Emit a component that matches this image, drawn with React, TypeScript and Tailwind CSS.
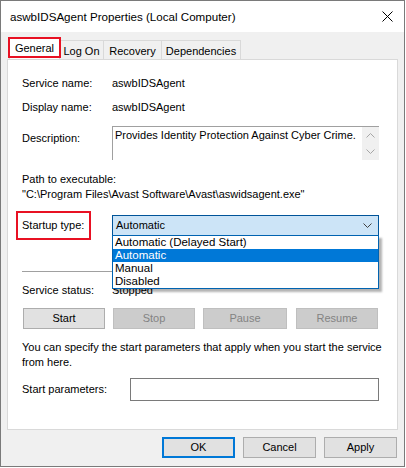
import { ReactNode } from "react";

const font = { fontFamily: '"Liberation Sans", Arial, sans-serif' };

function TabButton({ label, active, width }: { label: string; active?: boolean; width: string }) {
  if (active) {
    return (
      <div className={`relative z-10 -mb-px flex h-[22px] ${width} items-start justify-center border border-b-0 border-[#d9d9d9] bg-white pt-[3px]`}>
        {label}
        <div className="pointer-events-none absolute -left-[2px] -top-[1px] h-[21px] w-[53px] border-2 border-[#e81123]" />
      </div>
    );
  }
  return (
    <div className={`mt-[3px] flex h-[19px] ${width} items-center justify-center border border-b-0 border-l-0 border-[#d9d9d9] bg-[#f0f0f0] pt-[2px]`}>
      {label}
    </div>
  );
}

function FieldRow({
  label,
  children,
  className = "",
  labelClass = "",
}: {
  label: string;
  children: ReactNode;
  className?: string;
  labelClass?: string;
}) {
  return (
    <div className={`flex ${className}`}>
      <div className={`w-[90px] shrink-0 ${labelClass}`}>{label}</div>
      {children}
    </div>
  );
}

function ServiceButton({
  label,
  disabled,
  width = "w-[82px]",
  className = "",
}: {
  label: string;
  disabled?: boolean;
  width?: string;
  className?: string;
}) {
  return (
    <div
      className={`flex h-[21px] ${width} items-center justify-center border ${className} ${
        disabled
          ? "border-[#bfbfbf] bg-[#cccccc] text-[#838383]"
          : "border-[#adadad] bg-[#e1e1e1] text-black"
      }`}
    >
      {label}
    </div>
  );
}

function Chevron({ up, className = "" }: { up?: boolean; className?: string }) {
  return (
    <svg width="9" height="5" viewBox="0 0 9 5" className={className}>
      <path
        d={up ? "M0.5 4.5 L4.5 0.5 L8.5 4.5" : "M0.5 0.5 L4.5 4.5 L8.5 0.5"}
        fill="none"
        stroke="currentColor"
        strokeWidth="1"
      />
    </svg>
  );
}

export default function App() {
  const startupOptions = ["Automatic (Delayed Start)", "Automatic", "Manual", "Disabled"];
  const selected = "Automatic";

  return (
    <div
      style={font}
      className="h-[468px] w-[406px] overflow-hidden bg-white text-[11px] leading-[15px] text-black"
    >
      <div className="flex h-[467px] w-[405px] flex-col border border-[#7a7a7a] bg-[#f0f0f0]">
        {/* title bar */}
        <div className="flex h-[31px] shrink-0 items-center justify-between bg-white pl-[9px] pr-[10px]">
          <span className="text-[11.6px]">aswbIDSAgent Properties (Local Computer)</span>
          <svg width="11" height="11" viewBox="0 0 11 11" className="mr-[1px]">
            <path d="M0.5 0.5 L10.5 10.5 M10.5 0.5 L0.5 10.5" stroke="#000" strokeWidth="1" />
          </svg>
        </div>

        {/* tab strip */}
        <div className="mt-[5px] flex pl-[8px]">
          <TabButton label="General" active width="w-[51px]" />
          <TabButton label="Log On" width="w-[44px]" />
          <TabButton label="Recovery" width="w-[58px]" />
          <TabButton label="Dependencies" width="w-[79px]" />
        </div>

        {/* General page */}
        <div className="ml-[6px] h-[371px] w-[391px] shrink-0 border border-[#d9d9d9] bg-white pl-[14px]">
          <FieldRow label="Service name:" className="mt-[16px]">
            <span>aswbIDSAgent</span>
          </FieldRow>
          <FieldRow label="Display name:" className="mt-[9px]">
            <span>aswbIDSAgent</span>
          </FieldRow>

          <FieldRow label="Description:" className="mt-[11px]" labelClass="pt-[5px]">
            <div className="flex h-[34px] w-[267px] border-l border-t border-[#a0a0a0] bg-white">
              <div className="flex-1 whitespace-nowrap pl-[2px] pt-[1px]">
                Provides Identity Protection Against Cyber Crime.
              </div>
              <div className="flex w-[17px] flex-col items-center justify-between bg-[#f0f0f0] py-[6px] text-[#a6a6a6]">
                <Chevron up />
                <Chevron />
              </div>
            </div>
          </FieldRow>

          <div className="mt-[12px]">Path to executable:</div>
          <div>"C:\Program Files\Avast Software\Avast\aswidsagent.exe"</div>

          {/* startup type */}
          <div className="relative mt-[13px] flex items-center">
            <div className="relative w-[90px] shrink-0">
              Startup type:
              <div className="pointer-events-none absolute -left-[6px] -top-[7px] h-[29px] w-[75px] border-2 border-[#e81123]" />
            </div>
            <div className="relative">
              <div className="flex h-[21px] w-[267px] items-center justify-between border border-[#005499] bg-[#cce4f7] pl-[3px] pr-[6px]">
                <span>{selected}</span>
                <Chevron className="text-[#404040]" />
              </div>
              <div className="absolute left-0 top-[20px] z-20 w-[267px] border border-[#0063b1] bg-white shadow-[3px_3px_2px_rgba(0,0,0,0.3)]">
                {startupOptions.map((option) => (
                  <div
                    key={option}
                    className={`h-[13px] pl-[2px] text-[11.5px] leading-[13px] ${
                      option === selected ? "bg-[#0078d7] text-white" : ""
                    }`}
                  >
                    {option}
                  </div>
                ))}
              </div>
            </div>
          </div>

          <div className="mt-[35px] h-px w-[356px] bg-[#a0a0a0]" />

          <FieldRow label="Service status:" className="mt-[11px]">
            <span>Stopped</span>
          </FieldRow>

          <div className="mt-[10px] flex pl-[1px]">
            <ServiceButton label="Start" />
            <ServiceButton label="Stop" disabled className="ml-[8px]" />
            <ServiceButton label="Pause" disabled width="w-[84px]" className="ml-[8px]" />
            <ServiceButton label="Resume" disabled className="ml-[9px]" />
          </div>

          <p className="mt-[11px] w-[360px]">
            You can specify the start parameters that apply when you start the service
            <br />
            from here.
          </p>

          <div className="mt-[8px] flex items-center">
            <div className="w-[108px] shrink-0">Start parameters:</div>
            <div className="h-[23px] w-[249px] border border-[#7a7a7a] bg-white" />
          </div>
        </div>

        {/* dialog buttons */}
        <div className="mt-[7px] flex justify-end gap-[8px] pr-[7px]">
          <div className="flex h-[21px] w-[73px] items-center justify-center border-2 border-[#0078d7] bg-[#e1e1e1]">
            OK
          </div>
          <ServiceButton label="Cancel" width="w-[73px]" />
          <ServiceButton label="Apply" width="w-[73px]" />
        </div>
      </div>
    </div>
  );
}
